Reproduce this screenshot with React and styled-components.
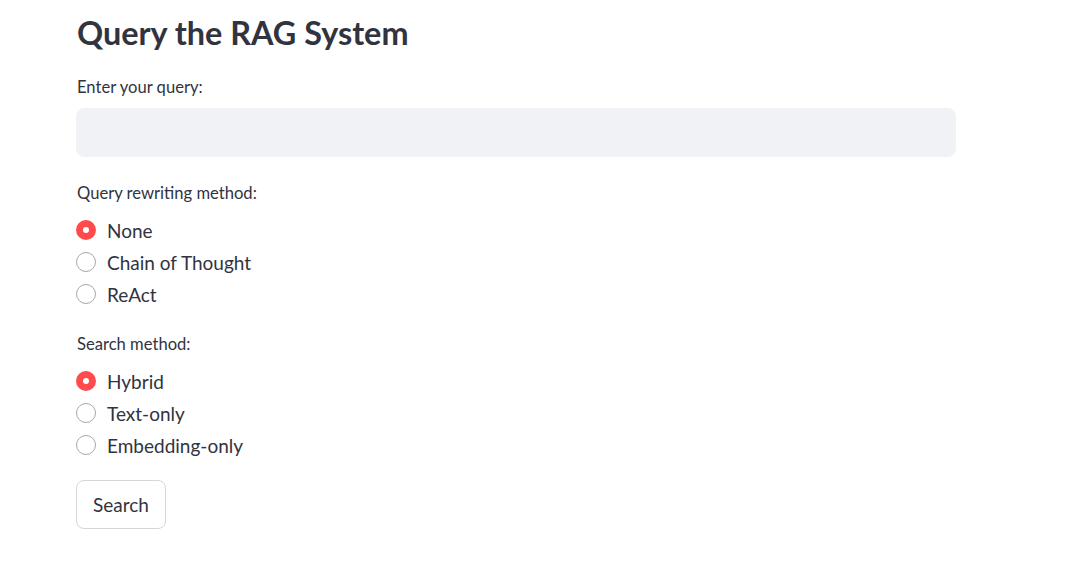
import React, { useState } from 'react';
import styled, { createGlobalStyle } from 'styled-components';

const GlobalStyle = createGlobalStyle`
    body {
        margin: 0;
        background: #ffffff;
        font-family: "Source Sans Pro", Lato, "Liberation Sans", sans-serif;
        color: #31333f;
    }
`;

const REWRITE_OPTIONS = ['None', 'Chain of Thought', 'ReAct'];
const SEARCH_OPTIONS = ['Hybrid', 'Text-only', 'Embedding-only'];

const RadioGroup = ({ options, value, onChange }) => (
    <STYLE_RADIO_LIST>
        {options.map((opt) => (
            <STYLE_RADIO_ROW key={opt} onClick={() => onChange(opt)}>
                <STYLE_DOT $checked={opt === value} />
                <span>{opt}</span>
            </STYLE_RADIO_ROW>
        ))}
    </STYLE_RADIO_LIST>
);

const App = () => {
    const [query, setQuery] = useState('');
    const [rewrite, setRewrite] = useState('None');
    const [search, setSearch] = useState('Hybrid');

    return (
        <>
            <GlobalStyle />
            <STYLE_PAGE>
                <STYLE_TITLE>Query the RAG System</STYLE_TITLE>

                <STYLE_LABEL $top={24}>Enter your query:</STYLE_LABEL>
                <STYLE_INPUT value={query} onChange={(e) => setQuery(e.target.value)} />

                <STYLE_LABEL $top={26}>Query rewriting method:</STYLE_LABEL>
                <RadioGroup options={REWRITE_OPTIONS} value={rewrite} onChange={setRewrite} />

                <STYLE_LABEL $top={24}>Search method:</STYLE_LABEL>
                <RadioGroup options={SEARCH_OPTIONS} value={search} onChange={setSearch} />

                <STYLE_BUTTON>Search</STYLE_BUTTON>
            </STYLE_PAGE>
        </>
    );
};

const STYLE_PAGE = styled.div`
    display: flex;
    flex-direction: column;
    align-items: flex-start;
    padding: 12px 0 0 76px;
    width: 880px;
`;

const STYLE_TITLE = styled.h1`
    margin: 0;
    font-size: 32.4px;
    line-height: 41px;
    font-weight: 700;
    color: #31333f;
    padding-left: 1px;
`;

const STYLE_LABEL = styled.label`
    margin-top: ${(p) => p.$top}px;
    font-size: 16.6px;
    line-height: 20px;
    padding-left: 1px;
`;

const STYLE_INPUT = styled.input`
    margin-top: 11px;
    width: 100%;
    height: 49px;
    box-sizing: border-box;
    border: 1px solid #f0f2f6;
    border-radius: 8px;
    background: #f0f2f6;
    padding: 0 14px;
    font-family: inherit;
    font-size: 18px;
    color: #31333f;
    outline: none;
`;

const STYLE_RADIO_LIST = styled.div`
    margin-top: 11px;
    display: flex;
    flex-direction: column;
`;

const STYLE_RADIO_ROW = styled.div`
    display: flex;
    align-items: center;
    gap: 11px;
    height: 32px;
    font-size: 19px;
    cursor: pointer;
`;

const STYLE_DOT = styled.span`
    width: 20px;
    height: 20px;
    box-sizing: border-box;
    border-radius: 50%;
    border: ${(p) => (p.$checked ? '7px solid #ff4b4b' : '1px solid #a3a8b4')};
    background: #ffffff;
`;

const STYLE_BUTTON = styled.button`
    margin-top: 19px;
    height: 49px;
    padding: 0 16px;
    border: 1px solid #d6d6d9;
    border-radius: 8px;
    background: #ffffff;
    font-family: inherit;
    font-size: 19px;
    color: #31333f;
    cursor: pointer;
`;

export default App;
